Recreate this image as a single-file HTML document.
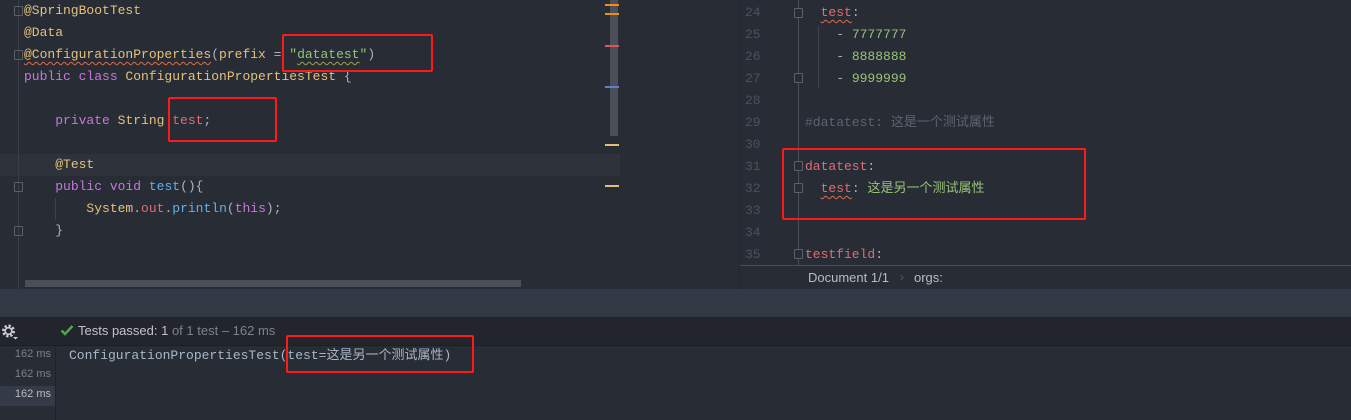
<!DOCTYPE html>
<html><head><meta charset="utf-8"><style>
*{margin:0;padding:0;box-sizing:border-box}
body{width:1351px;height:420px;background:#282c34;overflow:hidden;position:relative;font-family:"Liberation Mono","Noto Sans CJK SC",monospace;font-size:13px;color:#bbbbbb}
.a{position:absolute}
.ln{position:absolute;white-space:pre;height:22px;line-height:22px}
.an{color:#e5c07b}.kw{color:#c678dd}.cl{color:#e5c07b}.st{color:#98c379}.fd{color:#e06c75}.fn{color:#61afef}.pl{color:#abb2bf}.gr{color:#5c6370}.nm{color:#495162}
.box{position:absolute;border:2px solid #ff1a1a;border-radius:2px}
.ui{font-family:"Liberation Sans",sans-serif}
.wv{text-decoration:underline wavy #e06c4a;text-decoration-thickness:1px;text-underline-offset:3px}
.wg{text-decoration:underline wavy #9aa34a;text-decoration-thickness:1px;text-underline-offset:3px}
.fold{position:absolute;width:9px;height:10px;border:1px solid #5a5f68;border-radius:1px}
</style></head><body>
<!-- left editor -->
<div class="a" style="left:0;top:154px;width:620px;height:22px;background:#2e323b"></div>
<div class="a" style="left:18px;top:0;width:1px;height:289px;background:#3a3e46"></div>
<div class="fold" style="left:14px;top:6px"></div>
<div class="fold" style="left:14px;top:50px"></div>
<div class="fold" style="left:14px;top:182px"></div>
<div class="fold" style="left:14px;top:226px"></div>
<div class="a" style="left:55px;top:198px;width:1px;height:22px;background:#3e434c"></div>
<div class="ln" style="left:24px;top:0"><span class="an">@SpringBootTest</span></div>
<div class="ln" style="left:24px;top:22px"><span class="an">@Data</span></div>
<div class="ln" style="left:24px;top:44px"><span class="an wv">@ConfigurationProperties</span><span class="pl">(</span><span class="an">prefix</span><span class="pl"> = </span><span class="st">"<span class="wg">datatest</span>"</span><span class="pl">)</span></div>
<div class="ln" style="left:24px;top:66px"><span class="kw">public class </span><span class="cl">ConfigurationPropertiesTest</span><span class="pl"> {</span></div>
<div class="ln" style="left:24px;top:110px">    <span class="kw">private </span><span class="cl">String </span><span class="fd">test</span><span class="pl">;</span></div>
<div class="ln" style="left:24px;top:154px">    <span class="an">@Test</span></div>
<div class="ln" style="left:24px;top:176px">    <span class="kw">public void </span><span class="fn">test</span><span class="pl">(){</span></div>
<div class="ln" style="left:24px;top:198px">        <span class="cl">System</span><span class="pl">.</span><span class="fd">out</span><span class="pl">.</span><span class="fn">println</span><span class="pl">(</span><span class="kw">this</span><span class="pl">);</span></div>
<div class="ln" style="left:24px;top:220px">    <span class="pl">}</span></div>
<div class="a" style="left:25px;top:280px;width:496px;height:7px;background:#4b4f57"></div>
<div class="a" style="left:610px;top:0;width:8px;height:136px;background:#4b4f57"></div>
<div class="a" style="left:605px;top:4px;width:14px;height:2px;background:#f08c1a"></div>
<div class="a" style="left:605px;top:13px;width:14px;height:2px;background:#f08c1a"></div>
<div class="a" style="left:605px;top:45px;width:14px;height:2px;background:#e05555"></div>
<div class="a" style="left:605px;top:86px;width:14px;height:2px;background:#5b82c8"></div>
<div class="a" style="left:605px;top:144px;width:14px;height:2px;background:#e5c07b"></div>
<div class="a" style="left:605px;top:185px;width:14px;height:2px;background:#e5c07b"></div>
<!-- right editor -->
<div class="a" style="left:739px;top:0;width:1px;height:289px;background:#23262c"></div>
<div class="a" style="left:798px;top:0;width:1px;height:265px;background:#4a4e56"></div>
<div class="a" style="left:818px;top:26px;width:1px;height:62px;background:#3e434c"></div>
<div class="fold" style="left:794px;top:8px;background:#282c34"></div>
<div class="fold" style="left:794px;top:73px;background:#282c34"></div>
<div class="fold" style="left:794px;top:161px;background:#282c34"></div>
<div class="fold" style="left:794px;top:183px;background:#282c34"></div>
<div class="fold" style="left:794px;top:249px;background:#282c34"></div>
<div class="ln nm" style="left:745px;top:2px">24</div>
<div class="ln nm" style="left:745px;top:24px">25</div>
<div class="ln nm" style="left:745px;top:46px">26</div>
<div class="ln nm" style="left:745px;top:68px">27</div>
<div class="ln nm" style="left:745px;top:90px">28</div>
<div class="ln nm" style="left:745px;top:112px">29</div>
<div class="ln nm" style="left:745px;top:134px">30</div>
<div class="ln nm" style="left:745px;top:156px">31</div>
<div class="ln nm" style="left:745px;top:178px">32</div>
<div class="ln nm" style="left:745px;top:200px">33</div>
<div class="ln nm" style="left:745px;top:222px">34</div>
<div class="ln nm" style="left:745px;top:244px">35</div>
<div class="ln" style="left:805px;top:2px">  <span class="fd wv">test</span><span class="pl">:</span></div>
<div class="ln" style="left:805px;top:24px">    <span class="pl">- </span><span class="st">7777777</span></div>
<div class="ln" style="left:805px;top:46px">    <span class="pl">- </span><span class="st">8888888</span></div>
<div class="ln" style="left:805px;top:68px">    <span class="pl">- </span><span class="st">9999999</span></div>
<div class="ln gr" style="left:805px;top:112px">#datatest: 这是一个测试属性</div>
<div class="ln" style="left:805px;top:156px"><span class="fd">datatest</span><span class="pl">:</span></div>
<div class="ln" style="left:805px;top:178px">  <span class="fd wv">test</span><span class="pl">: </span><span class="st">这是另一个测试属性</span></div>
<div class="ln" style="left:805px;top:244px"><span class="fd">testfield</span><span class="pl">:</span></div>
<div class="a" style="left:740px;top:265px;width:611px;height:1px;background:#4a4e56"></div>
<div class="a ui" style="left:808px;top:270px;font-size:13px;color:#b8bcc4">Document 1/1</div>
<div class="a ui" style="left:900px;top:270px;font-size:12px;color:#555a63">›</div>
<div class="a ui" style="left:914px;top:270px;font-size:13px;color:#b8bcc4">orgs:</div>
<!-- strip -->
<div class="a" style="left:0;top:289px;width:1351px;height:28px;background:#333944"></div>
<div class="a" style="left:0;top:317px;width:1351px;height:28px;background:#22252c"></div>
<div class="a" style="left:0;top:345px;width:1351px;height:1px;background:#1c1e23"></div>
<div class="a" style="left:55px;top:346px;width:1px;height:74px;background:#1f2227"></div>
<div class="a" style="left:0;top:386px;width:55px;height:20px;background:#343a46"></div>
<svg class="a" style="left:1px;top:323px" width="18" height="18" viewBox="0 0 18 18"><circle cx="7.5" cy="8" r="5" fill="none" stroke="#c8ccd2" stroke-width="3" stroke-dasharray="2.2 1.7"/><circle cx="7.5" cy="8" r="3.3" fill="none" stroke="#c8ccd2" stroke-width="1.6"/><path d="M12 14h5l-2.5 2.5z" fill="#c8ccd2"/></svg>
<svg class="a" style="left:60px;top:323px" width="14" height="14" viewBox="0 0 14 14"><path d="M1.5 7.5l3.5 3.5 7.5-8" fill="none" stroke="#4ea84e" stroke-width="2.4"/></svg>
<div class="a ui" style="left:78px;top:323px;font-size:13px;color:#c0c4ca">Tests passed: 1 <span style="color:#7b8290">of 1 test – 162 ms</span></div>
<div class="a ui" style="left:0;top:348px;width:51px;text-align:right;font-size:11px;color:#7b808a">162 ms</div>
<div class="a ui" style="left:0;top:368px;width:51px;text-align:right;font-size:11px;color:#7b808a">162 ms</div>
<div class="a ui" style="left:0;top:388px;width:51px;text-align:right;font-size:11px;color:#b8bcc4">162 ms</div>
<div class="ln" style="left:69px;top:345px;color:#a9b7c6">ConfigurationPropertiesTest(test=这是另一个测试属性)</div>
<!-- red boxes -->
<div class="box" style="left:282px;top:34px;width:151px;height:38px"></div>
<div class="box" style="left:168px;top:97px;width:109px;height:45px"></div>
<div class="box" style="left:782px;top:148px;width:304px;height:72px"></div>
<div class="box" style="left:286px;top:335px;width:188px;height:38px"></div>
</body></html>
